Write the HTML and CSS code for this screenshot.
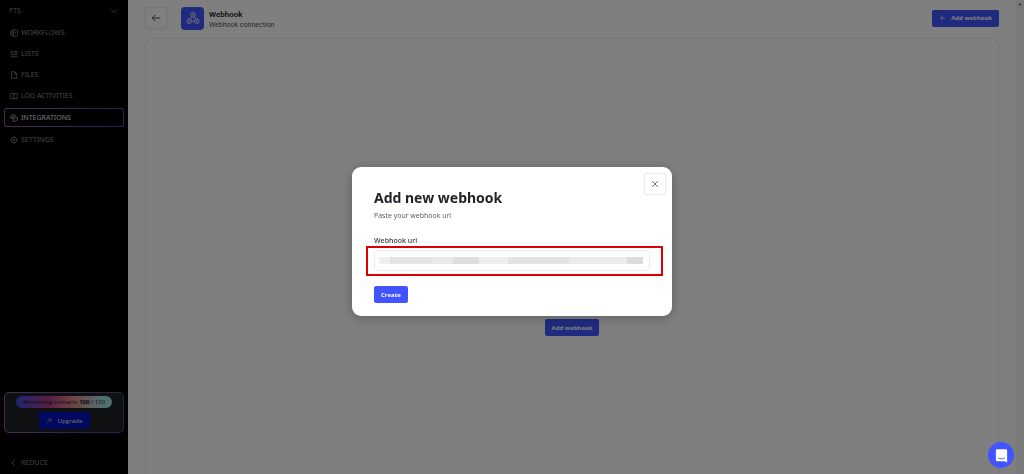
FILE: index.html
```
<!DOCTYPE html>
<html lang="en">
<head>
<meta charset="utf-8">
<title>Webhook</title>
<link rel="stylesheet" href="styles.css">
</head>
<body>
<div class="app">
  <aside class="sidebar">
    <button class="workspace" type="button">PTS
      <svg class="icon" viewBox="0 0 16 16"><path d="M2 5l6 6 6-6"/></svg>
    </button>
    <nav class="nav">
      <a class="nav-item" href="#"><svg class="icon" viewBox="0 0 16 16"><rect x="4" y="1.500" width="11" height="13" rx="2"/><path d="M7 2v12M1.500 3v10M10.500 5v5"/></svg>WORKFLOWS</a>
      <a class="nav-item" href="#"><svg class="icon" viewBox="0 0 16 16"><circle cx="3.500" cy="4" r="2"/><path d="M8 3h7M8 6h7M1 9.500h14M1 13.500h14"/></svg>LISTS</a>
      <a class="nav-item" href="#"><svg class="icon" viewBox="0 0 16 16"><path d="M3 1.500h6.500L14 6v8.500H3zM9.500 1.500V6H14"/></svg>FILES</a>
      <a class="nav-item" href="#"><svg class="icon" viewBox="0 0 16 16"><path d="M8 3v11M1.500 2.500H6L8 4l2-1.500h4.500v10.500H10l-2 1.500-2-1.500H1.500z"/></svg>LOG ACTIVITIES</a>
      <a class="nav-item active" href="#"><svg class="icon" viewBox="0 0 16 16"><path d="M3 9a3.500 3.500 0 0 1 0-6c3-3 6.500-1 8.500 1M6 6h5a3.500 3.500 0 0 1 3 6c-3 4-7 3-9.500 0M10 10H6a2 2 0 0 1 0-4"/></svg>INTEGRATIONS</a>
      <a class="nav-item" href="#"><svg class="icon" viewBox="0 0 16 16"><circle cx="8" cy="8" r="5.500"/><circle cx="8" cy="8" r="1.500"/><path d="M8 .5v2M8 13.500v2M.5 8h2M13.500 8h2"/></svg>SETTINGS</a>
    </nav>
    <section class="plan">
      <p class="quota">Remaining contacts <b>100</b> / 100</p>
      <button class="upgrade" type="button"><svg class="icon small" viewBox="0 0 16 16"><path d="M3 13L13 3M5 3h8v8"/></svg>Upgrade</button>
    </section>
    <button class="reduce" type="button"><svg class="icon" viewBox="0 0 16 16"><path d="M10 2L4 8l6 6"/></svg>REDUCE</button>
  </aside>
  <main class="main">
    <header class="header">
      <button class="square" type="button" aria-label="Back"><svg class="arrow" viewBox="0 0 16 16"><path d="M15 8H2M7 3L2 8l5 5"/></svg></button>
      <span class="logo"><svg viewBox="0 0 24 24"><circle cx="12" cy="6.500" r="4"/><circle cx="12" cy="6.500" r="1"/><circle cx="5.500" cy="17.500" r="4"/><circle cx="5.500" cy="17.500" r="1"/><circle cx="18.500" cy="17.500" r="4"/><circle cx="18.500" cy="17.500" r="1"/><path d="M10 10l-3 4.500M14 10l3 4.500M9.500 17.500h5"/></svg></span>
      <div class="heading">
        <h1>Webhook</h1>
        <p>Webhook connection</p>
      </div>
      <button class="primary add" type="button"><svg class="icon small" viewBox="0 0 16 16"><path d="M8 1v14M1 8h14"/></svg>Add webhook</button>
    </header>
    <section class="card">
      <button class="primary" type="button">Add webhook</button>
    </section>
  </main>
  <div class="scrollbar"><svg viewBox="0 0 8 6"><path d="M1 5l3-4 3 4z"/></svg></div>
</div>
<div class="overlay">
  <div class="modal" role="dialog" aria-modal="true" aria-labelledby="title">
    <button class="square close" type="button" aria-label="Close"><svg viewBox="0 0 16 16"><path d="M2 2l12 12M14 2L2 14"/></svg></button>
    <h2 id="title">Add new webhook</h2>
    <p class="hint">Paste your webhook url</p>
    <label for="url">Webhook url</label>
    <div class="field">
      <input id="url" type="text">
      <div class="redacted"></div>
      <div class="marker"></div>
    </div>
    <button class="primary" type="button">Create</button>
  </div>
</div>
<button class="chat" type="button" aria-label="Open chat"><svg viewBox="0 0 24 24"><path class="bubble" d="M5 2h14a2 2 0 0 1 2 2v19l-4-2H5a2 2 0 0 1-2-2V4a2 2 0 0 1 2-2z"/><path class="smile" d="M6.500 15.500c3 2.500 8 2.500 11 0"/></svg></button>
</body>
</html>
```
FILE: styles.css
```
* { box-sizing: border-box; }
body { margin: 0; font-family: "Open Sans", "Noto Sans", sans-serif; font-size: 7px; line-height: 10px; }
h1, h2, p { margin: 0; }
button { font: inherit; border: 0; padding: 0; background: none; cursor: pointer; }
svg { fill: none; stroke: currentColor; flex: none; }

.app { display: flex; height: 100vh; overflow: hidden; background: #fff; }

.sidebar { display: flex; flex-direction: column; width: 128px; flex: none; padding: 0 4px; background: #000; color: #8c8c8c; }
.icon { width: 8px; height: 8px; stroke-width: 1.5; }
.small { width: 6px; height: 6px; }
.workspace { display: flex; align-items: center; justify-content: space-between; height: 22px; padding: 0 6px 0 5px; color: inherit; }
.nav { display: flex; flex-direction: column; font-family: "Noto Sans", sans-serif; }
.nav-item { display: flex; align-items: center; gap: 3px; height: 21px; padding: 0 5px; border: 1px solid transparent; border-radius: 3px; color: inherit; text-decoration: none; }
.nav-item.active {
  height: 19px;
  margin: 2px 0;
  color: #e6e6e6;
  background: linear-gradient(#000, #000) padding-box, linear-gradient(90deg, #a050a0, #5046b4) border-box;
}
.plan {
  display: flex; flex-direction: column; align-items: center; gap: 4px;
  margin-top: auto; padding: 3px; height: 41px;
  border: 1px solid transparent; border-radius: 5px;
  background: linear-gradient(#1e2022, #1e2022) padding-box, linear-gradient(90deg, #a050a0, #464690) border-box;
}
.quota { padding: 1px 7px; border-radius: 6px; font-size: 6px; color: #111; white-space: nowrap; background: linear-gradient(90deg, #3c48e0, #b03c8c 33%, #e08888 60%, #a0e0e0 90%); }
.upgrade { display: flex; align-items: center; justify-content: center; gap: 6px; width: 51px; height: 17px; flex: none; border-radius: 2px; background: #0010c0; color: #ccc; font-weight: 600; font-size: 6px; }
.reduce { display: flex; align-items: center; gap: 3px; height: 20px; margin: 20px 0 1px; padding: 0 6px; color: inherit; }

.main { display: flex; flex-direction: column; flex: 1; padding: 6px 17px 0; min-width: 0; }
.header { display: flex; align-items: center; height: 24px; margin-bottom: 8px; flex: none; }
.square { display: grid; place-items: center; width: 22px; height: 22px; border: 1px solid #ececec; border-radius: 3px; background: #fff; color: #444; box-shadow: 0 0 2px #e8e8e8; }
.square svg { width: 8px; height: 8px; stroke-width: 1.5; }
.square .arrow { width: 10px; height: 10px; }
.logo { display: grid; place-items: center; width: 23px; height: 23px; margin: 0 5px 0 14px; border-radius: 4px; background: #4154ff; color: #fff; }
.logo svg { width: 14px; height: 14px; stroke-width: 1.3; }
.heading { padding-top: 2px; font-family: Roboto, sans-serif; color: #555; }
.heading h1 { font-size: 8px; line-height: 11px; font-weight: 600; color: #222; }
.primary { display: inline-flex; align-items: center; justify-content: center; height: 17px; padding: 0 7px; border-radius: 2px; background: #4154ff; color: #fff; font-weight: 700; font-size: 6px; }
.add { margin-left: auto; gap: 6px; }
.card { flex: 1; display: flex; justify-content: center; align-items: flex-start; padding-top: 280px; border: 1px solid #ececec; border-bottom: 0; border-radius: 8px 8px 0 0; }
.scrollbar { width: 8px; background: #f4f4f4; text-align: center; flex: none; }
.scrollbar svg { width: 6px; height: 4px; fill: #777; stroke: none; display: block; margin: 2px auto; }

.overlay { position: fixed; inset: 0; display: flex; align-items: center; justify-content: center; padding-top: 9px; background: rgba(0, 0, 0, .5); }
.modal { position: relative; width: 320px; padding: 21px 22px 13px; border-radius: 9px; background: #fff; box-shadow: 0 2px 12px rgba(0, 0, 0, .25); }
.close { position: absolute; top: 6px; right: 6px; }
.modal h2 { font-family: "Noto Sans", sans-serif; font-size: 14px; line-height: 20px; font-weight: 700; color: #212529; }
.hint { margin-top: 3px; color: #555; }
.modal label { display: block; margin-top: 15px; font-weight: 600; color: #444; }
.field { position: relative; margin: 4px 0 15px; }
.field input { display: block; width: 100%; height: 21px; padding: 0 6px; border: 1px solid #ececec; border-radius: 4px; font: inherit; }
.redacted { position: absolute; left: 5px; right: 7px; top: 7px; height: 7px; background: linear-gradient(90deg, #f0f0f0 0 4%, #e4e4e4 4% 20%, #eaeaea 20% 28%, #dedede 28% 38%, #ededed 38% 49%, #e3e3e3 49% 72%, #ebebeb 72% 94%, #dcdcdc 94%); }
.marker { position: absolute; inset: -4px -13px -5px -8px; border: 2px solid #dc0000; pointer-events: none; }

.chat { position: fixed; right: 10px; bottom: 6px; display: grid; place-items: center; width: 26px; height: 26px; border-radius: 50%; background: #4154ff; }
.chat svg { width: 15px; height: 15px; }
.bubble { fill: #fff; stroke: none; }
.smile { stroke: #4154ff; stroke-width: 1.5; }
```
